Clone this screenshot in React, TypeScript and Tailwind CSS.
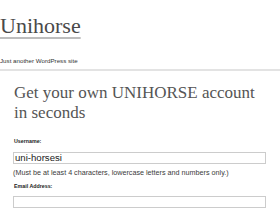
import React from "react";

export default function App() {
  return (
    <div className="w-[280px] h-[210px] overflow-hidden bg-white">
      <div className="pt-[13px] pl-0">
        <a className="block w-fit text-[22px] leading-[26px] text-[#4a4a4a] font-['Liberation_Serif',serif] underline decoration-[#bdbdbd] decoration-2 underline-offset-[4px]">
          Unihorse
        </a>
      </div>
      <div className="mt-[18px] text-[6.2px] leading-[8px] text-[#333] font-['Liberation_Sans',Arial,sans-serif]">
        Just another WordPress site
      </div>
      <div className="mt-[4px] h-[2px] bg-[#e3e3e3]" />
      <div className="px-[14px]">
        <h2 className="mt-[12px] text-[17px] leading-[20px] text-[#555] font-['Liberation_Serif',serif] font-normal">
          Get your own UNIHORSE account in seconds
        </h2>
        <label className="block mt-[14.5px] text-[5.3px] leading-[7px] font-bold text-[#222] font-['Liberation_Sans',Arial,sans-serif]">
          Username:
        </label>
        <div className="mt-[7.5px] h-[12px] w-[253px] -ml-[1px] border border-[#cccccc] flex items-center px-[1px] text-[9.6px] text-[#222] font-['Liberation_Sans',Arial,sans-serif]">
          uni-horsesi
        </div>
        <div className="mt-[3.5px] text-[7.2px] leading-[9px] text-[#3a3a3a] font-['Liberation_Sans',Arial,sans-serif] -ml-[1px]">
          (Must be at least 4 characters, lowercase letters and numbers only.)
        </div>
        <label className="block mt-[6px] text-[5.3px] leading-[7px] font-bold text-[#222] font-['Liberation_Sans',Arial,sans-serif]">
          Email Address:
        </label>
        <div className="mt-[6.5px] h-[12px] w-[253px] -ml-[1px] border border-[#cccccc]" />
      </div>
    </div>
  );
}
